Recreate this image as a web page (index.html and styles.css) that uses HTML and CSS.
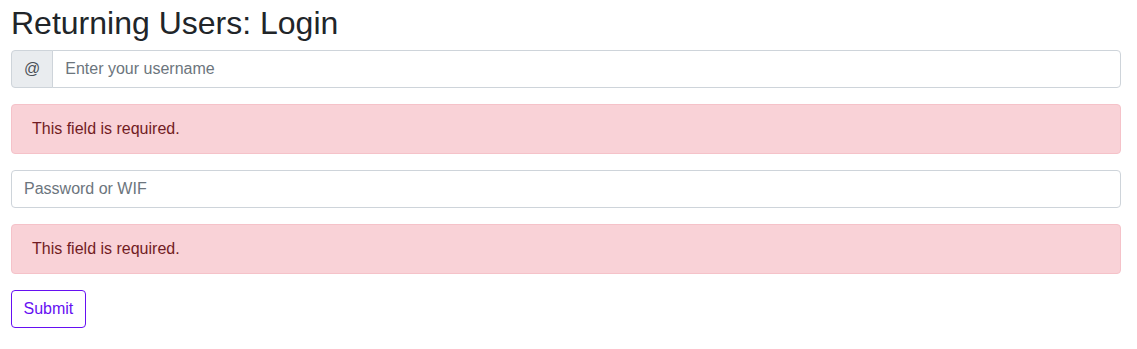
FILE: index.html
```html
<!DOCTYPE html>
<html lang="en">
<head>
<meta charset="utf-8">
<title>Login</title>
<link rel="stylesheet" href="styles.css">
</head>
<body>
<main class="page">
  <h2 class="title">Returning Users: Login</h2>
  <form class="form">
    <div class="input-group">
      <span class="addon">@</span>
      <input class="control grouped" type="text" placeholder="Enter your username">
    </div>
    <div class="alert">This field is required.</div>
    <input class="control" type="password" placeholder="Password or WIF">
    <div class="alert">This field is required.</div>
    <div><button class="btn" type="button">Submit</button></div>
  </form>
</main>
</body>
</html>
```

FILE: styles.css
```css
* { box-sizing: border-box; }
html, body { margin: 0; background: #fff; }
body {
  font-family: "Liberation Sans", Arial, sans-serif;
  font-size: 16px;
  line-height: 1.5;
  color: #212529;
}
.page {
  padding: 4px 16px 0 11px;
}
.title {
  margin: 0 0 8px;
  font-size: 32px;
  font-weight: 500;
  line-height: 1.2;
}
.form {
  display: flex;
  flex-direction: column;
  gap: 16px;
}
.input-group {
  display: flex;
}
.addon {
  display: flex;
  align-items: center;
  padding: 6px 12px;
  background: #e9ecef;
  border: 1px solid #ced4da;
  border-radius: 4px 0 0 4px;
  color: #495057;
  font-size: 16px;
  line-height: 1.5;
}
.control {
  display: block;
  width: 100%;
  height: 38px;
  padding: 6px 12px;
  font-family: inherit;
  font-size: 16px;
  line-height: 1.5;
  color: #495057;
  background: #fff;
  border: 1px solid #ced4da;
  border-radius: 4px;
  outline: none;
}
.control::placeholder { color: #6c757d; opacity: 1; }
.grouped {
  flex: 1;
  margin-left: -1px;
  border-radius: 0 4px 4px 0;
}
.alert {
  padding: 12px 20px;
  background: #f9d2d7;
  border: 1px solid #f5c2c9;
  border-radius: 4px;
  color: #721c24;
}
.btn {
  display: inline-block;
  padding: 6px 11.5px;
  font-family: inherit;
  font-size: 16px;
  line-height: 1.5;
  color: #6610f2;
  background: transparent;
  border: 1px solid #6610f2;
  border-radius: 4px;
  cursor: pointer;
}
```
